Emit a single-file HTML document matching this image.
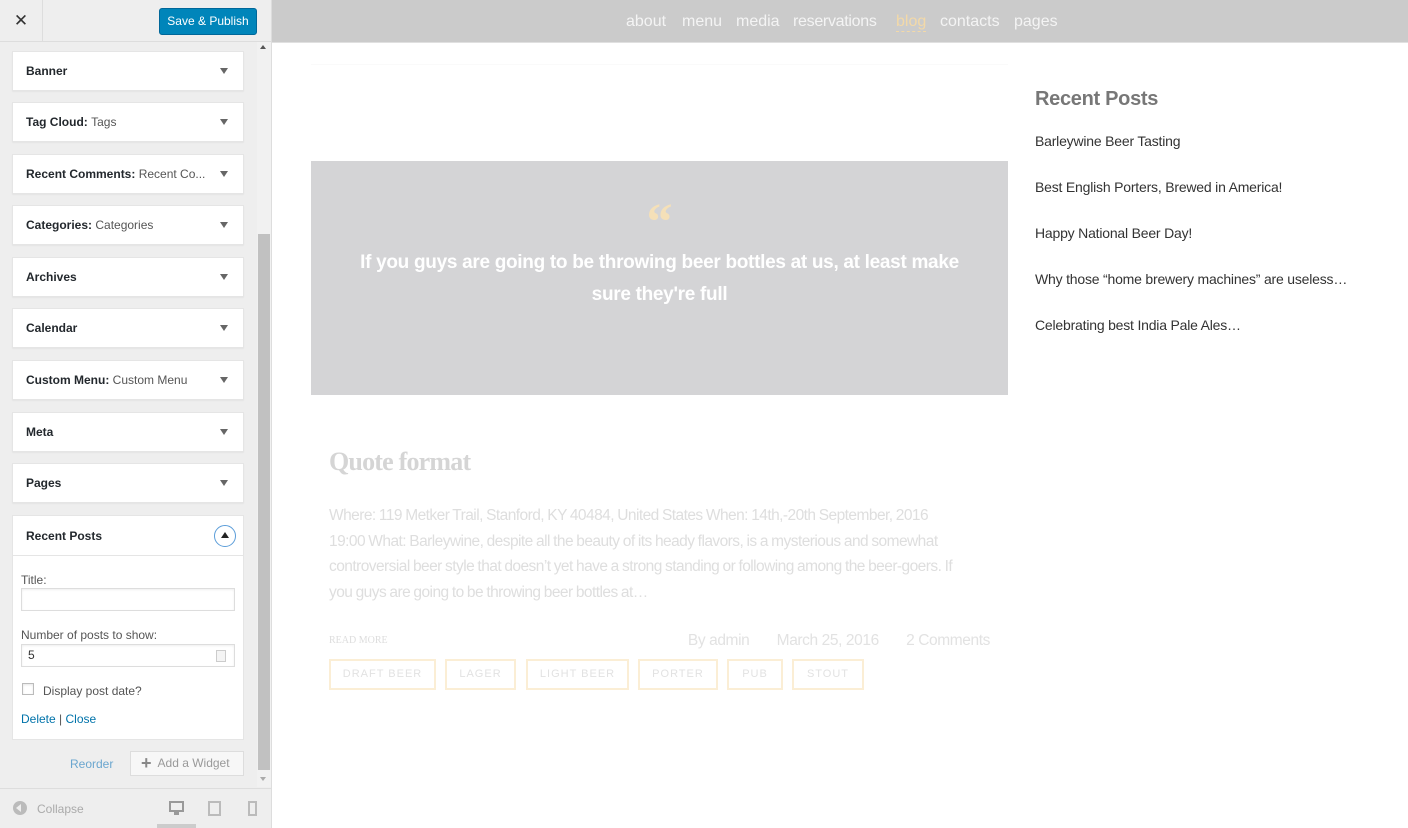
<!DOCTYPE html>
<html><head><meta charset="utf-8"><style>
*{box-sizing:border-box;margin:0;padding:0}
body{width:1408px;height:828px;overflow:hidden;font-family:"Liberation Sans",sans-serif;background:#fff;position:relative}
#side{position:absolute;left:0;top:0;width:272px;height:828px;background:#eeeeee;border-right:1px solid #ddd}
#top{position:absolute;left:0;top:0;width:271px;height:42px;border-bottom:1px solid #ddd;background:#eee}
#close{position:absolute;left:0;top:0;width:43px;height:42px;border-right:1px solid #ddd;font-size:17px;text-align:center;line-height:42px;color:#333}
#pub{position:absolute;left:159px;top:8px;width:98px;height:27px;background:#0085ba;border:1px solid #006799;border-radius:3px;color:#fff;font-size:12px;text-align:center;line-height:25px}
.w{position:absolute;left:12px;width:232px;height:40px;background:#fff;border:1px solid #e5e5e5;box-shadow:0 1px 1px rgba(0,0,0,.04);font-size:12px;font-weight:bold;color:#23282d;padding:0 0 0 13px;line-height:38px}
.w span{font-weight:normal;color:#555}
.w:after{content:"";position:absolute;right:15px;top:16px;border:4px solid transparent;border-top:6px solid #666;border-bottom:0}
#sb{position:absolute;left:257px;top:42px;width:14px;height:745px;background:#f1f1f1}
#thumb{position:absolute;left:258px;top:234px;width:12px;height:536px;background:#c1c1c1}
#exp{position:absolute;left:12px;top:515px;width:232px;height:225px;background:#fff;border:1px solid #e5e5e5;font-size:12px;color:#555}
#exp .h{height:40px;border-bottom:1px solid #e5e5e5;font-weight:bold;color:#23282d;padding-left:13px;line-height:40px}
.in{position:absolute;left:8px;width:214px;height:23px;border:1px solid #ddd;box-shadow:inset 0 1px 2px rgba(0,0,0,.07)}
#foot{position:absolute;left:0;top:788px;width:271px;height:40px;border-top:1px solid #ddd;background:#eee;font-size:12px;color:#aaa}
#main{position:absolute;left:272px;top:0;width:1136px;height:828px}
#nav{height:43px;background:#cbcbcb;border-bottom:1px solid #e0e0e0;font-size:16px;color:#f4f4f4;padding-top:13px;position:relative}
#nav a{position:absolute;top:13px}
#quote{position:absolute;left:39px;top:161px;width:697px;height:234px;background:#d4d4d6;text-align:center;color:#fff}
</style></head><body>
<div id="side">
<div id="top"><div id="close">✕</div><div id="pub">Save &amp; Publish</div></div>
<div id="sb"></div><div id="thumb"></div>
<div style="position:absolute;left:260px;top:45px;border:3px solid transparent;border-bottom:4px solid #555;border-top:0"></div>
<div style="position:absolute;left:260px;top:777px;border:3px solid transparent;border-top:4px solid #aaa;border-bottom:0"></div>
<div class="w" style="top:51px">Banner</div>
<div class="w" style="top:102px">Tag Cloud: <span>Tags</span></div>
<div class="w" style="top:154px">Recent Comments: <span>Recent Co...</span></div>
<div class="w" style="top:205px">Categories: <span>Categories</span></div>
<div class="w" style="top:257px">Archives</div>
<div class="w" style="top:308px">Calendar</div>
<div class="w" style="top:360px">Custom Menu: <span>Custom Menu</span></div>
<div class="w" style="top:412px">Meta</div>
<div class="w" style="top:463px">Pages</div>
<div id="exp"><div class="h">Recent Posts</div>
<div style="position:absolute;left:201px;top:9px;width:22px;height:22px;border:1.5px solid #5b9dd9;border-radius:50%"></div>
<div style="position:absolute;left:208px;top:16px;border:4px solid transparent;border-bottom:6px solid #222;border-top:0"></div>
<div style="position:absolute;left:8px;top:57px">Title:</div>
<div class="in" style="top:72px"></div>
<div style="position:absolute;left:8px;top:112px">Number of posts to show:</div>
<div class="in" style="top:128px;padding-left:6px;line-height:21px;color:#333">5</div>
<div style="position:absolute;left:203px;top:134px;width:10px;height:12px;border:1px solid #ccc;background:#f4f4f4"></div>
<div style="position:absolute;left:9px;top:167px;width:12px;height:12px;border:1px solid #bbb;box-shadow:inset 0 1px 2px rgba(0,0,0,.1)"></div>
<div style="position:absolute;left:30px;top:168px">Display post date?</div>
<div style="position:absolute;left:8px;top:196px;color:#0073aa">Delete <span style="color:#555">|</span> Close</div>
</div>
<div style="position:absolute;left:70px;top:757px;font-size:12px;color:#6aa6cf">Reorder</div>
<div style="position:absolute;left:130px;top:751px;width:114px;height:25px;border:1px solid #ddd;background:#f7f7f7;font-size:12px;color:#999;line-height:23px;padding-left:10px"><b style="font-size:18px;color:#888;vertical-align:-2px">+</b>&nbsp; Add a Widget</div>
<div id="foot">
<div style="position:absolute;left:13px;top:12px;width:14px;height:14px;border-radius:50%;background:#bbb"></div>
<div style="position:absolute;left:16px;top:15px;border:4px solid transparent;border-right:5px solid #eee;border-left:0"></div>
<div style="position:absolute;left:37px;top:13px">Collapse</div>
<div style="position:absolute;left:169px;top:12px;width:15px;height:11px;border:2px solid #999"></div>
<div style="position:absolute;left:174px;top:23px;width:5px;height:3px;background:#999"></div>
<div style="position:absolute;left:157px;top:35px;width:39px;height:4px;background:#ccc"></div>
<div style="position:absolute;left:208px;top:12px;width:13px;height:15px;border:2px solid #bbb"></div>
<div style="position:absolute;left:248px;top:12px;width:9px;height:15px;border:2px solid #bbb"></div>
</div>
</div>
<div id="main">
<div id="nav"><a style="left:354px">about</a><a style="left:410px">menu</a><a style="left:464px">media</a><a style="left:521px;letter-spacing:-0.3px">reservations</a><a style="left:624px;color:#f3d9a8;border-bottom:1px dashed #f3d9a8">blog</a><a style="left:668px">contacts</a><a style="left:742px">pages</a></div>
<div style="position:absolute;left:39px;top:64px;width:697px;height:1px;background:#fafafa"></div>
<div id="quote">
<div style="position:absolute;left:0;width:100%;top:36px;font-family:'Liberation Serif',serif;font-size:52px;line-height:52px;color:#f5e0b8;font-weight:bold">“</div>
<div style="position:absolute;left:40px;right:40px;top:86px;font-size:19px;font-weight:bold;line-height:32px;letter-spacing:-0.3px">If you guys are going to be throwing beer bottles at us, at least make sure they're full</div>
</div>
<div style="position:absolute;left:57px;top:447px;font-family:'Liberation Serif',serif;font-size:26px;font-weight:bold;color:#d5d5d5;letter-spacing:-0.8px">Quote format</div>
<div style="position:absolute;left:57px;top:503px;width:625px;font-size:15.5px;line-height:25.5px;color:#dedede;letter-spacing:-0.55px;word-spacing:-0.5px">Where: 119 Metker Trail, Stanford, KY 40484, United States When: 14th,-20th September, 2016 19:00 What: Barleywine, despite all the beauty of its heady flavors, is a mysterious and somewhat controversial beer style that doesn’t yet have a strong standing or following among the beer-goers. If you guys are going to be throwing beer bottles at…</div>
<div style="position:absolute;left:57px;top:635px;font-size:10px;color:#ddd;font-family:'Liberation Serif',serif">READ MORE</div>
<div style="position:absolute;right:418px;top:632px;font-size:15.5px;color:#e2e2e2;letter-spacing:-0.4px">By admin&nbsp;&nbsp;&nbsp;&nbsp;&nbsp;&nbsp;&nbsp;March 25, 2016&nbsp;&nbsp;&nbsp;&nbsp;&nbsp;&nbsp;&nbsp;2 Comments</div>
<div style="position:absolute;left:57px;top:659px;font-size:11px;color:#e2e2e2;letter-spacing:1px">
<span style="position:absolute;left:0;width:107px;height:31px;border:2px solid #fbeed5;text-align:center;line-height:27px">DRAFT BEER</span>
<span style="position:absolute;left:116px;width:71px;height:31px;border:2px solid #fbeed5;text-align:center;line-height:27px">LAGER</span>
<span style="position:absolute;left:197px;width:103px;height:31px;border:2px solid #fbeed5;text-align:center;line-height:27px">LIGHT BEER</span>
<span style="position:absolute;left:309px;width:80px;height:31px;border:2px solid #fbeed5;text-align:center;line-height:27px">PORTER</span>
<span style="position:absolute;left:398px;width:56px;height:31px;border:2px solid #fbeed5;text-align:center;line-height:27px">PUB</span>
<span style="position:absolute;left:463px;width:72px;height:31px;border:2px solid #fbeed5;text-align:center;line-height:27px">STOUT</span>
</div>
<div style="position:absolute;left:763px;top:88px;font-size:20px;font-weight:bold;color:#777;letter-spacing:-0.3px">Recent Posts</div>
<div style="position:absolute;left:763px;top:133px;font-size:14px;color:#333;line-height:46px;letter-spacing:-0.2px">
<div style="margin-top:-15px">Barleywine Beer Tasting</div><div>Best English Porters, Brewed in America!</div><div>Happy National Beer Day!</div><div>Why those “home brewery machines” are useless…</div><div>Celebrating best India Pale Ales…</div></div>
</div>
</body></html>
